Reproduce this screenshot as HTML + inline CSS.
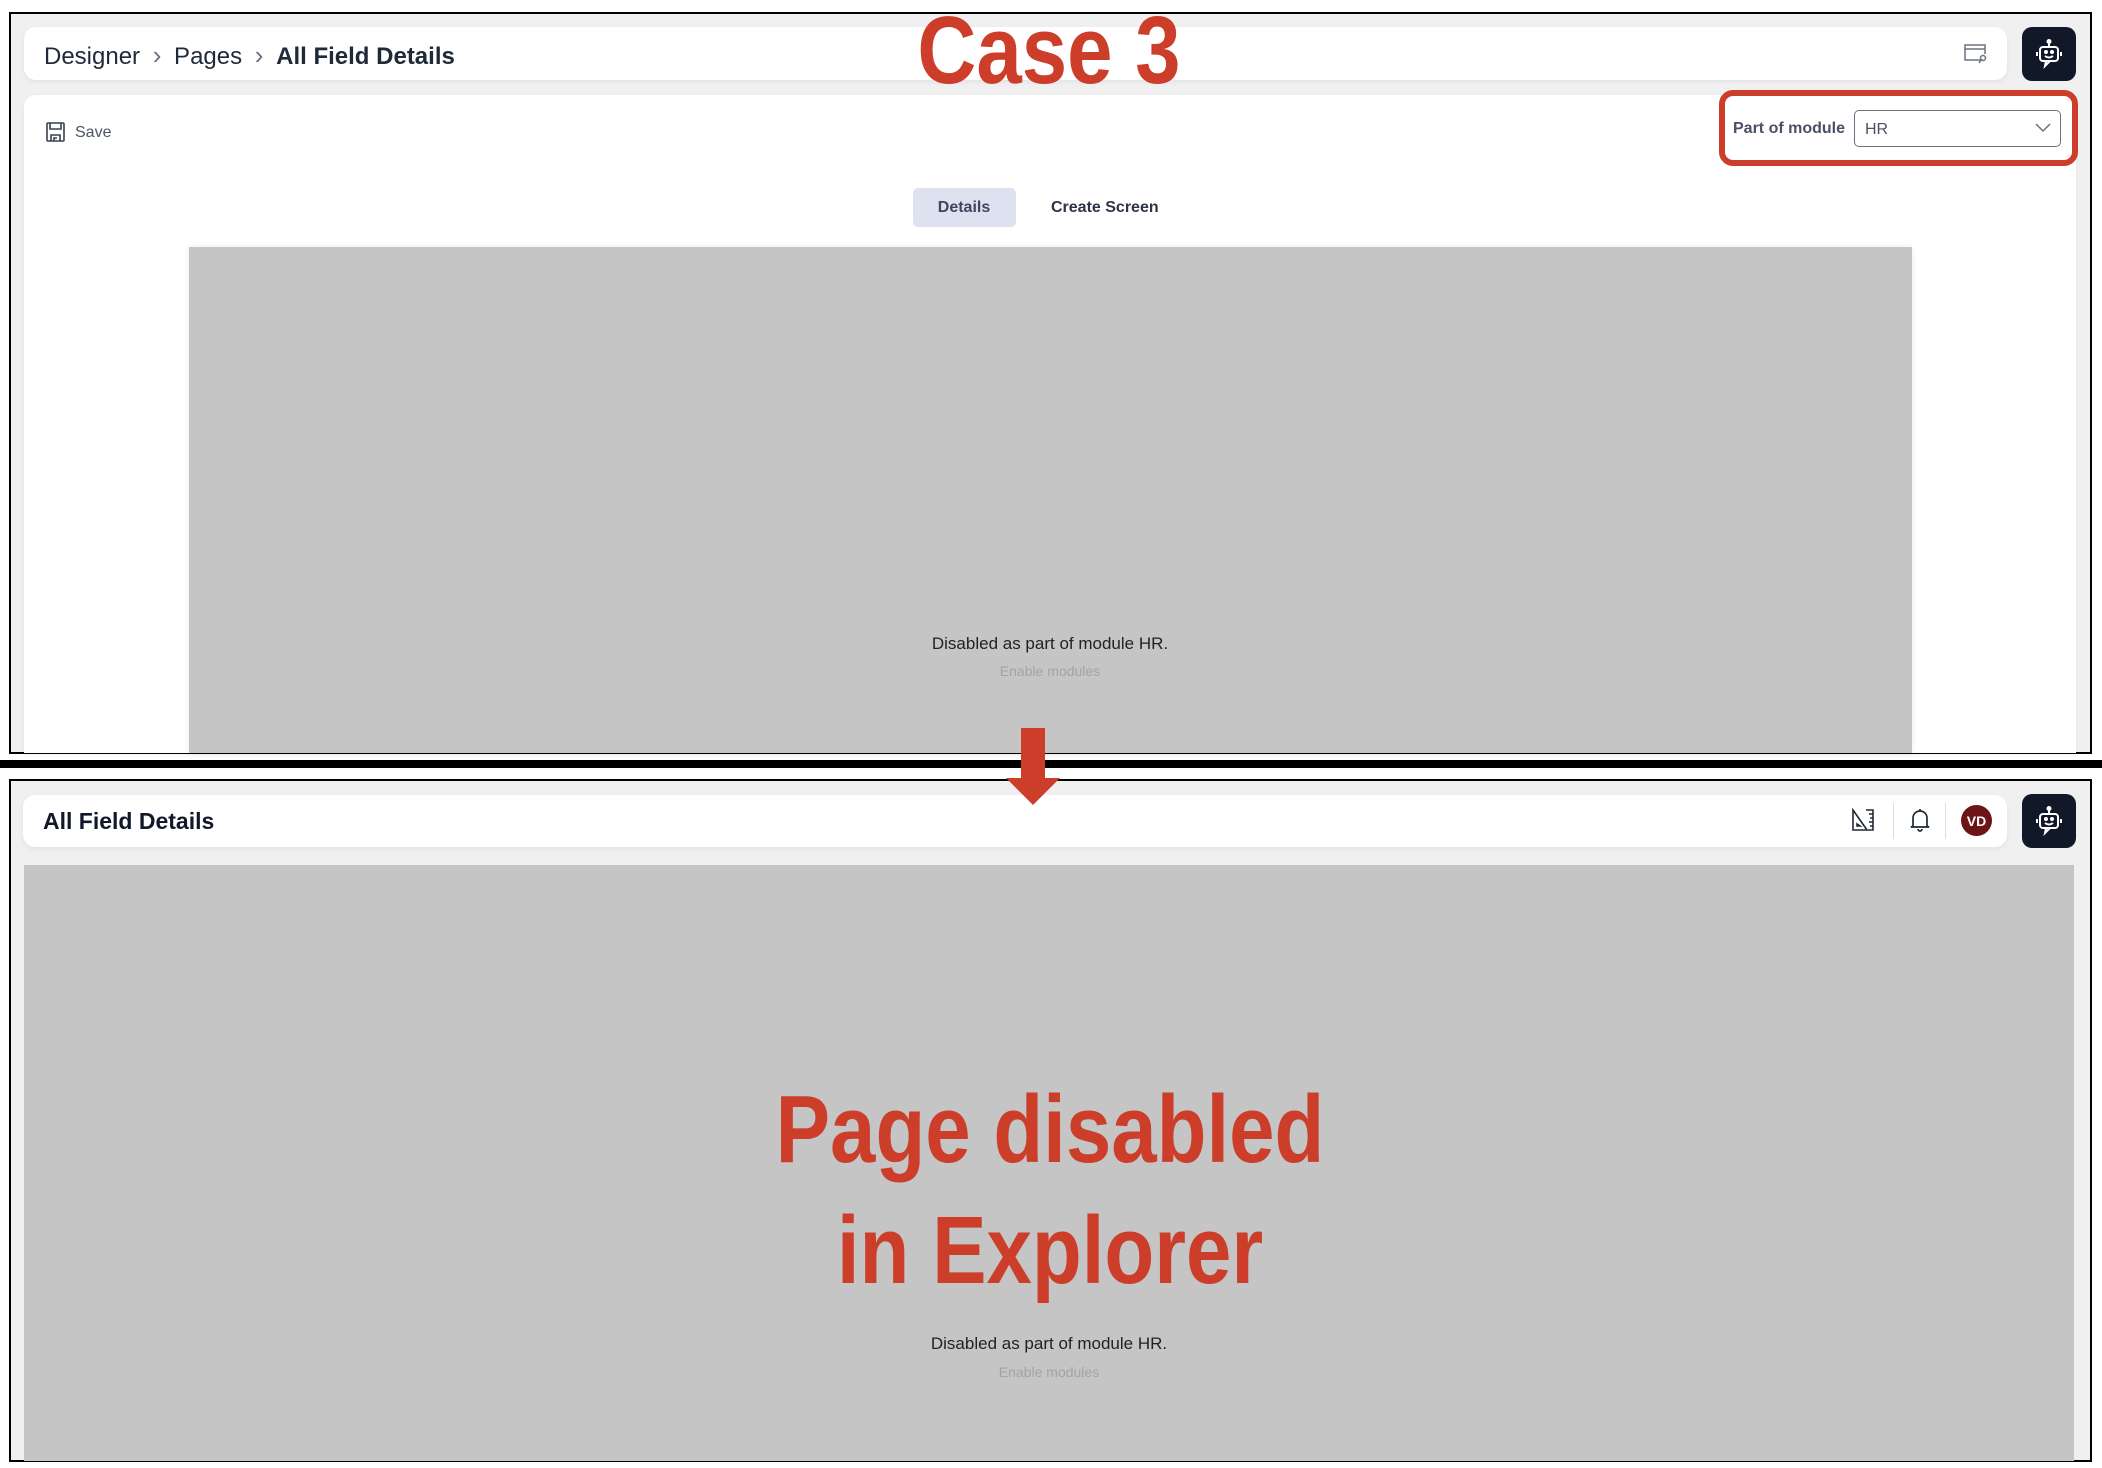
<!DOCTYPE html>
<html><head><meta charset="utf-8"><style>
*{box-sizing:border-box;margin:0;padding:0}
body{width:2102px;height:1468px;background:#fff;position:relative;overflow:hidden;font-family:"Liberation Sans",sans-serif;color:#111827}
.abs{position:absolute}
.panel{position:absolute;background:#f0f0f0;border:2px solid #000}
.card{position:absolute;background:#fff;border-radius:12px;box-shadow:0 2px 6px rgba(0,0,0,.06)}
.bot{position:absolute;background:#111827;border-radius:10px;display:flex;align-items:center;justify-content:center}
.gray{position:absolute;background:#c5c5c5}
.big{position:absolute;color:#cc3d2a;font-weight:bold;font-size:96px;white-space:nowrap;transform:translateX(-50%) scaleX(.85);transform-origin:center;line-height:1}
.c{position:absolute;transform:translateX(-50%);white-space:nowrap}
</style></head><body>

<!-- TOP PANEL -->
<div class="panel" style="left:9px;top:12px;width:2083px;height:742px"></div>
<div class="card" style="left:24px;top:27px;width:1983px;height:53px"></div>
<div class="abs" style="left:44px;top:40px;font-size:24px;color:#1f2937;white-space:nowrap">Designer <span style="color:#6b7280;font-size:26px;font-weight:100;margin:0 6px">&#x203A;</span> Pages <span style="color:#6b7280;font-size:26px;margin:0 6px">&#x203A;</span> <b>All Field Details</b></div>
<svg class="abs" style="left:1963px;top:43px" width="26" height="22" viewBox="0 0 26 22" fill="none" stroke="#6b7280" stroke-width="1.5"><path d="M20 17H2V2h20v9M2 6h20"/><circle cx="20" cy="15" r="2.5"/><path d="M18 17l-2 3"/></svg>
<div class="bot" style="left:2022px;top:27px;width:54px;height:54px"><svg width="28" height="30" viewBox="0 0 28 30" fill="none" stroke="#fff" stroke-width="2"><path d="M14 2v5"/><circle cx="14" cy="2.5" r="1.5" fill="#fff"/><rect x="5" y="8" width="18" height="14" rx="3"/><path d="M2 13v4M26 13v4M11 22l-1 5 5-5"/><circle cx="11" cy="13" r="1" fill="#fff"/><circle cx="17" cy="13" r="1" fill="#fff"/><path d="M10 17q4 3 8 0"/></svg></div>

<div class="card" style="left:24px;top:95px;width:2052px;height:658px;border-radius:12px 12px 0 0"></div>
<svg class="abs" style="left:46px;top:122px" width="19" height="20" viewBox="0 0 19 20" fill="none" stroke="#374151" stroke-width="1.6"><rect x="1" y="1" width="17" height="18" rx="1"/><path d="M4 1v6h11V1M5 19v-6h9v6M8 19v-3h3"/></svg>
<div class="abs" style="left:75px;top:124px;font-size:16px;color:#4b5563">Save</div>

<div class="abs" style="left:1719px;top:90px;width:359px;height:76px;border:6px solid #cc3d2a;border-radius:14px;background:#fff"></div>
<div class="abs" style="left:1733px;top:120px;font-size:16px;font-weight:bold;color:#4a5068">Part of module</div>
<div class="abs" style="left:1854px;top:110px;width:207px;height:37px;border:1.5px solid #6b7280;border-radius:5px;background:#fff"></div>
<div class="abs" style="left:1865px;top:121px;font-size:16px;color:#4a5068">HR</div>
<svg class="abs" style="left:2034px;top:121px" width="18" height="12" viewBox="0 0 18 12" fill="none" stroke="#6b7280" stroke-width="1.5"><path d="M2 3l7 7 7-7"/></svg>

<div class="abs" style="left:913px;top:188px;width:103px;height:39px;background:#dde1f0;border-radius:5px"></div>
<div class="c" style="left:964px;top:199px;font-size:16px;font-weight:bold;color:#3f4660">Details</div>
<div class="abs" style="left:1051px;top:199px;font-size:16px;font-weight:bold;color:#2d3348">Create Screen</div>

<div class="gray" style="left:189px;top:247px;width:1723px;height:506px;box-shadow:0 0 6px rgba(0,0,0,.08)"></div>
<div class="c" style="left:1050px;top:634px;font-size:17px;color:#222">Disabled as part of module HR.</div>
<div class="c" style="left:1050px;top:663px;font-size:14px;color:#a3a3a3">Enable modules</div>

<div class="big" style="left:1049px;top:3px;font-size:96px">Case 3</div>

<!-- DIVIDER -->
<div class="abs" style="left:0;top:760px;width:2102px;height:8px;background:#000"></div>

<!-- BOTTOM PANEL -->
<div class="panel" style="left:9px;top:779px;width:2083px;height:683px"></div>
<div class="card" style="left:23px;top:795px;width:1984px;height:52px"></div>
<div class="abs" style="left:43px;top:808px;font-size:23px;font-weight:bold;color:#111827">All Field Details</div>
<svg class="abs" style="left:1851px;top:808px" width="24" height="24" viewBox="0 0 24 24" fill="none" stroke="#1f2937" stroke-width="1.6"><path d="M2 2l14 20H2z"/><path d="M6 16v2h3z"/><path d="M15 2h7v20h-5M18 6h4M19 10h3M18 14h4M19 18h3"/></svg>
<div class="abs" style="left:1893px;top:803px;width:1px;height:36px;background:#ddd"></div>
<svg class="abs" style="left:1909px;top:807px" width="22" height="26" viewBox="0 0 22 26" fill="none" stroke="#1f2937" stroke-width="1.7"><path d="M11 2v2M4 19V11a7 7 0 0114 0v8l2 1H2z"/><path d="M9 22a2 2 0 004 0"/></svg>
<div class="abs" style="left:1945px;top:803px;width:1px;height:36px;background:#ddd"></div>
<div class="abs" style="left:1961px;top:805px;width:31px;height:31px;border-radius:50%;background:#6b1515;color:#fff;font-weight:bold;font-size:14px;display:flex;align-items:center;justify-content:center">VD</div>
<div class="bot" style="left:2022px;top:794px;width:54px;height:54px"><svg width="28" height="30" viewBox="0 0 28 30" fill="none" stroke="#fff" stroke-width="2"><path d="M14 2v5"/><circle cx="14" cy="2.5" r="1.5" fill="#fff"/><rect x="5" y="8" width="18" height="14" rx="3"/><path d="M2 13v4M26 13v4M11 22l-1 5 5-5"/><circle cx="11" cy="13" r="1" fill="#fff"/><circle cx="17" cy="13" r="1" fill="#fff"/><path d="M10 17q4 3 8 0"/></svg></div>

<div class="gray" style="left:24px;top:865px;width:2050px;height:596px"></div>
<div class="big" style="left:1050px;top:1082px">Page disabled</div>
<div class="big" style="left:1050px;top:1203px">in Explorer</div>
<div class="c" style="left:1049px;top:1334px;font-size:17px;color:#222">Disabled as part of module HR.</div>
<div class="c" style="left:1049px;top:1364px;font-size:14px;color:#a3a3a3">Enable modules</div>

<!-- ARROW -->
<div class="abs" style="left:1021px;top:728px;width:24px;height:52px;background:#cc3d2a"></div>
<div class="abs" style="left:1006px;top:778px;width:0;height:0;border-left:27px solid transparent;border-right:27px solid transparent;border-top:27px solid #cc3d2a"></div>
</body></html>
